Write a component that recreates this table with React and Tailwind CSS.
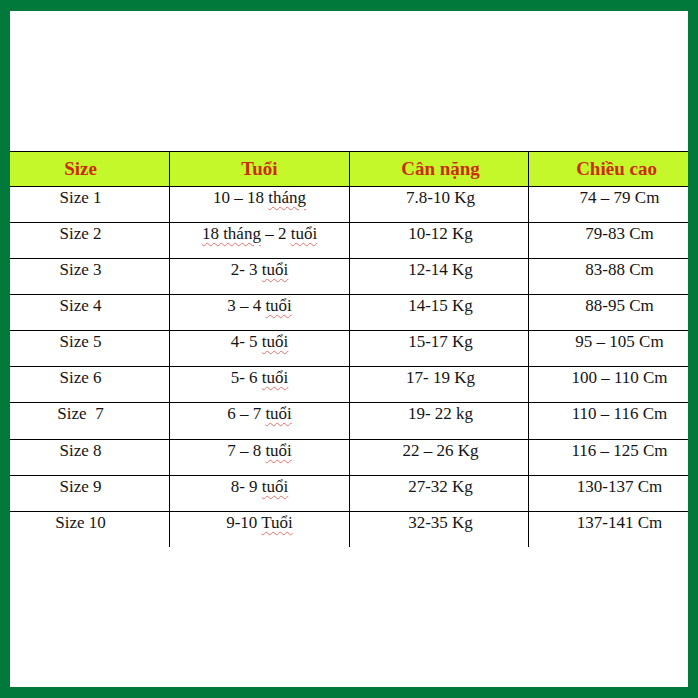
import React from "react";

const rows = [
  ["Size 1", ["10 – 18 ", ["tháng"]], "7.8-10 Kg", "74 – 79 Cm"],
  ["Size 2", [["18 tháng"], " – 2 ", ["tuổi"]], "10-12 Kg", "79-83 Cm"],
  ["Size 3", ["2- 3 ", ["tuổi"]], "12-14 Kg", "83-88 Cm"],
  ["Size 4", ["3 – 4 ", ["tuổi"]], "14-15 Kg", "88-95 Cm"],
  ["Size 5", ["4- 5 ", ["tuổi"]], "15-17 Kg", "95 – 105 Cm"],
  ["Size 6", ["5- 6 ", ["tuổi"]], "17- 19 Kg", "100 – 110 Cm"],
  ["Size  7", ["6 – 7 ", ["tuổi"]], "19- 22 kg", "110 – 116 Cm"],
  ["Size 8", ["7 – 8 ", ["tuổi"]], "22 – 26 Kg", "116 – 125 Cm"],
  ["Size 9", ["8- 9 ", ["tuổi"]], "27-32 Kg", "130-137 Cm"],
  ["Size 10", ["9-10 ", ["Tuổi"]], "32-35 Kg", "137-141 Cm"],
];

// word marked with the red spell-check squiggle
const Squiggle = ({ children }) => (
  <span className="underline decoration-wavy decoration-[#e8706a] decoration-[1px] underline-offset-[3px]">
    {children}
  </span>
);

const renderAge = (parts) =>
  parts.map((p, i) =>
    Array.isArray(p) ? <Squiggle key={i}>{p[0]}</Squiggle> : <span key={i}>{p}</span>
  );

const rowClass = (i) => {
  if (i === rows.length - 1) return "h-[35px]";
  if (i === 6) return "h-[37px] border-b border-black";
  return "h-[36px] border-b border-black";
};

const App = () => {
  return (
    <div className="w-[698px] h-[698px] bg-[#00793b] pt-[11px] px-[10px] pb-[11px]">
      <div
        className="w-full h-full bg-white pt-[140px] text-[#141414]"
        style={{ fontFamily: '"Liberation Serif", "Times New Roman", serif' }}
      >
        {/* header */}
        <div className="flex h-[36px] bg-[#c4f82b] border-t border-b border-black text-[19px] font-bold text-[#cc2c04]">
          <div className="w-[159px] flex items-center justify-center pr-[18px]">Size</div>
          <div className="w-[180px] flex items-center justify-center border-l border-black">Tuổi</div>
          <div className="w-[179px] flex items-center justify-center border-l border-black pl-[3px]">Cân nặng</div>
          <div className="flex-1 flex items-center justify-center border-l border-black pl-[16px]">Chiều cao</div>
        </div>

        {rows.map((r, i) => (
          <div key={i} className={`flex text-[17px] leading-[20px] ${rowClass(i)}`}>
            <div className="w-[159px] text-center pt-[1px] pr-[18px] whitespace-pre">{r[0]}</div>
            <div className="w-[180px] text-center pt-[1px] border-l border-black">{renderAge(r[1])}</div>
            <div className="w-[179px] text-center pt-[1px] border-l border-black pl-[3px]">{r[2]}</div>
            <div className="flex-1 text-center pt-[1px] border-l border-black pl-[22px]">{r[3]}</div>
          </div>
        ))}
      </div>
    </div>
  );
};

export default App;
